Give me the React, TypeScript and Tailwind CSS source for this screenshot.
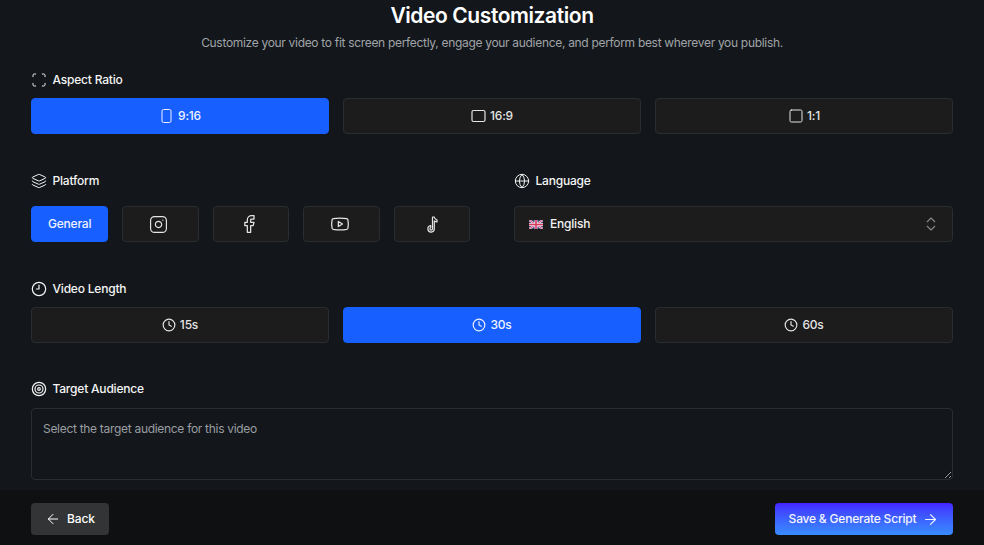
import { ArrowLeft, ArrowRight, ChevronsUpDown, Clock, Clock9, Facebook, Globe, Instagram, Layers, Scan, Square, Target, Youtube } from 'lucide-react';
import type { ReactNode } from 'react';

function Label({ icon, children }: { icon: ReactNode; children: ReactNode }) {
  return (
    <div className="flex h-5 items-center gap-[5.5px] text-[12px] font-medium leading-5 tracking-[-0.2px] text-[#f5f5f5]">
      {icon}
      {children}
    </div>
  );
}

function Option({ active, children, className = '' }: { active?: boolean; children: ReactNode; className?: string }) {
  return (
    <button
      className={`flex h-9 items-center justify-center gap-[4px] rounded border text-[12px] font-medium tracking-[-0.2px] ${
        active ? 'border-[#175fff] bg-[#175fff] text-[#eef2ff]' : 'border-[#2b2c2e] bg-[#1c1c1c] text-[#e5e5e5]'
      } ${className}`}
    >
      {children}
    </button>
  );
}

function UkFlag() {
  return (
    <svg width="14" height="9" viewBox="0 0 14 9">
      <rect width="14" height="9" fill="#3b3f73" />
      <path d="M0 0L14 9M14 0L0 9" stroke="#e8e4ea" strokeWidth="2" />
      <path d="M0 0L14 9M14 0L0 9" stroke="#d8385f" strokeWidth="0.8" />
      <path d="M7 0V9M0 4.5H14" stroke="#e8e4ea" strokeWidth="3" />
      <path d="M7 0V9M0 4.5H14" stroke="#d8385f" strokeWidth="1.6" />
    </svg>
  );
}

function PhoneIcon() {
  return (
    <svg width="15" height="16" viewBox="0 0 15 16" fill="none" stroke="currentColor" strokeWidth="1">
      <rect x="3" y="1.5" width="9" height="13" rx="1.5" />
    </svg>
  );
}

function WideIcon() {
  return (
    <svg width="15" height="16" viewBox="0 0 15 16" fill="none" stroke="currentColor" strokeWidth="1.2">
      <rect x="1" y="2.5" width="13" height="11" rx="1.5" />
    </svg>
  );
}

function TikTokIcon() {
  return (
    <svg width="16" height="18" viewBox="0 0 16 18" fill="none" stroke="currentColor" strokeWidth="1.2" strokeLinejoin="round">
      <path d="M8.5 2h1.8c.2 1.5 1 2.5 2.7 2.9v2c-1.1 0-2-.4-2.7-.9v7.8a3.2 3.2 0 1 1-3.6-3.1v1.9a1.3 1.3 0 1 0 1.8 1.2z" />
    </svg>
  );
}

export default function App() {
  return (
    <div className="flex h-[545px] flex-col overflow-hidden bg-[#13171b] font-['Inter',sans-serif]">
      <div className="h-[490px] px-[31px]">
        <h1 className="mt-[2px] text-center text-[21px] font-semibold leading-7 tracking-[-0.42px] text-white">Video Customization</h1>
        <p className="mt-[3px] text-center text-[12px] leading-5 tracking-[-0.31px] text-[#a0a3a7]">
          Customize your video to fit screen perfectly, engage your audience, and perform best wherever you publish.
        </p>

        <div className="mt-[17px]">
          <Label icon={<Scan size={16} strokeWidth={1.5} />}>Aspect Ratio</Label>
          <div className="mt-[8px] grid grid-cols-3 gap-[14px]">
            <Option active>
              <PhoneIcon />
              9:16
            </Option>
            <Option>
              <WideIcon />
              16:9
            </Option>
            <Option>
              <Square size={16} strokeWidth={1.5} className="-mr-px" />
              1:1
            </Option>
          </div>
        </div>

        <div className="mt-[37px] grid grid-cols-2 gap-[44px]">
          <div>
            <Label icon={<Layers size={16} strokeWidth={1.5} />}>Platform</Label>
            <div className="mt-[15px] flex gap-[14px]">
              <Option active className="w-[77.2px] flex-none">General</Option>
              <Option className="flex-1"><Instagram size={19} strokeWidth={1.5} className="mr-[4px]" /></Option>
              <Option className="flex-1"><Facebook size={20} strokeWidth={1.5} className="mr-[3px]" /></Option>
              <Option className="flex-1"><Youtube size={20} strokeWidth={1.5} className="mr-[2px]" /></Option>
              <Option className="flex-1"><TikTokIcon /></Option>
            </div>
          </div>
          <div>
            <Label icon={<Globe size={16} strokeWidth={1.5} />}>Language</Label>
            <button className="mt-[15px] flex h-9 w-full items-center rounded border border-[#2b2c2e] bg-[#1c1c1c] pl-[14px] pr-[12px] text-[12px] font-medium tracking-[-0.2px] text-[#f2f2f2]">
              <UkFlag />
              <span className="ml-[7px]">English</span>
              <ChevronsUpDown size={18} strokeWidth={1.5} className="ml-auto text-[#8a8a8a]" />
            </button>
          </div>
        </div>

        <div className="mt-[37px]">
          <Label icon={<Clock9 size={16} strokeWidth={1.8} />}>Video Length</Label>
          <div className="mt-[8px] grid grid-cols-3 gap-[14px]">
            <Option><Clock size={14} />15s</Option>
            <Option active><Clock size={14} />30s</Option>
            <Option><Clock size={14} />60s</Option>
          </div>
        </div>

        <div className="mt-[36px]">
          <Label icon={<Target size={16} strokeWidth={1.8} />}>Target Audience</Label>
          <textarea
            className="mt-[9px] block h-[72px] w-full rounded border border-[#2b2c2e] bg-transparent px-[11px] py-[12px] text-[12px] leading-4 tracking-tight text-white placeholder:text-[#9a9da1]"
            placeholder="Select the target audience for this video"
          />
        </div>
      </div>

      <div className="flex h-[55px] items-start justify-between bg-[#0f1012] px-[31px] pt-[13px]">
        <button className="flex h-8 w-[78px] items-center justify-center gap-[6px] rounded bg-[#333435] text-[12px] font-medium tracking-[-0.1px] text-white">
          <ArrowLeft size={16} strokeWidth={1.5} />
          Back
        </button>
        <button className="flex h-8 w-[178px] items-center justify-center gap-[6px] rounded bg-gradient-to-b from-[#4320ff] to-[#3a8cff] text-[12px] font-medium tracking-[-0.2px] text-[#f4f4ff]">
          Save &amp; Generate Script
          <ArrowRight size={17} strokeWidth={1.5} />
        </button>
      </div>
    </div>
  );
}
